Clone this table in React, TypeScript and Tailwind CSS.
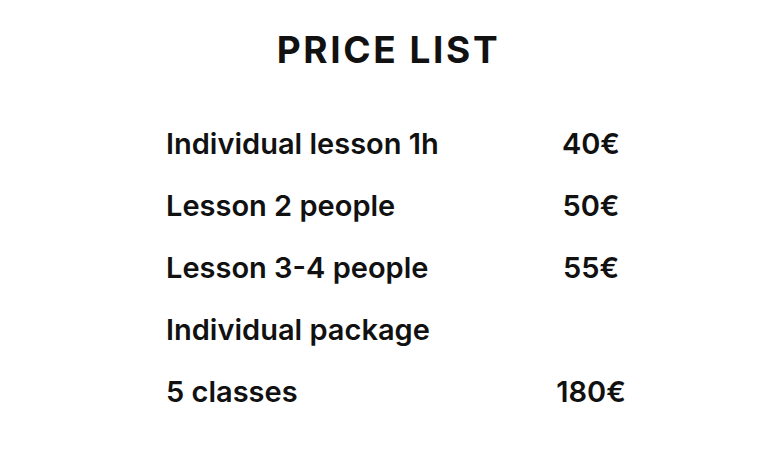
import React from "react";

const rows: [string, string][] = [
  ["Individual lesson 1h", "40€"],
  ["Lesson 2 people", "50€"],
  ["Lesson 3-4 people", "55€"],
  ["Individual package", ""],
  ["5 classes", "180€"],
];

export default function App() {
  return (
    <div className="w-[768px] h-[457px] bg-white text-[#111111]" style={{ fontFamily: "Inter, 'Noto Sans', sans-serif" }}>
      <h1 className="pt-[27px] pl-[9px] text-center text-[37px] leading-[46px] font-bold tracking-[0.07em]">PRICE LIST</h1>
      <div className="mt-[52px] ml-[166px] flex flex-col gap-[24px]">
        {rows.map(([name, price]) => (
          <div key={name} className="flex items-center h-[38px] text-[29px] leading-[38px] font-semibold">
            <div className="w-[350px]">{name}</div>
            <div className="w-[150px] text-center">{price}</div>
          </div>
        ))}
      </div>
    </div>
  );
}
